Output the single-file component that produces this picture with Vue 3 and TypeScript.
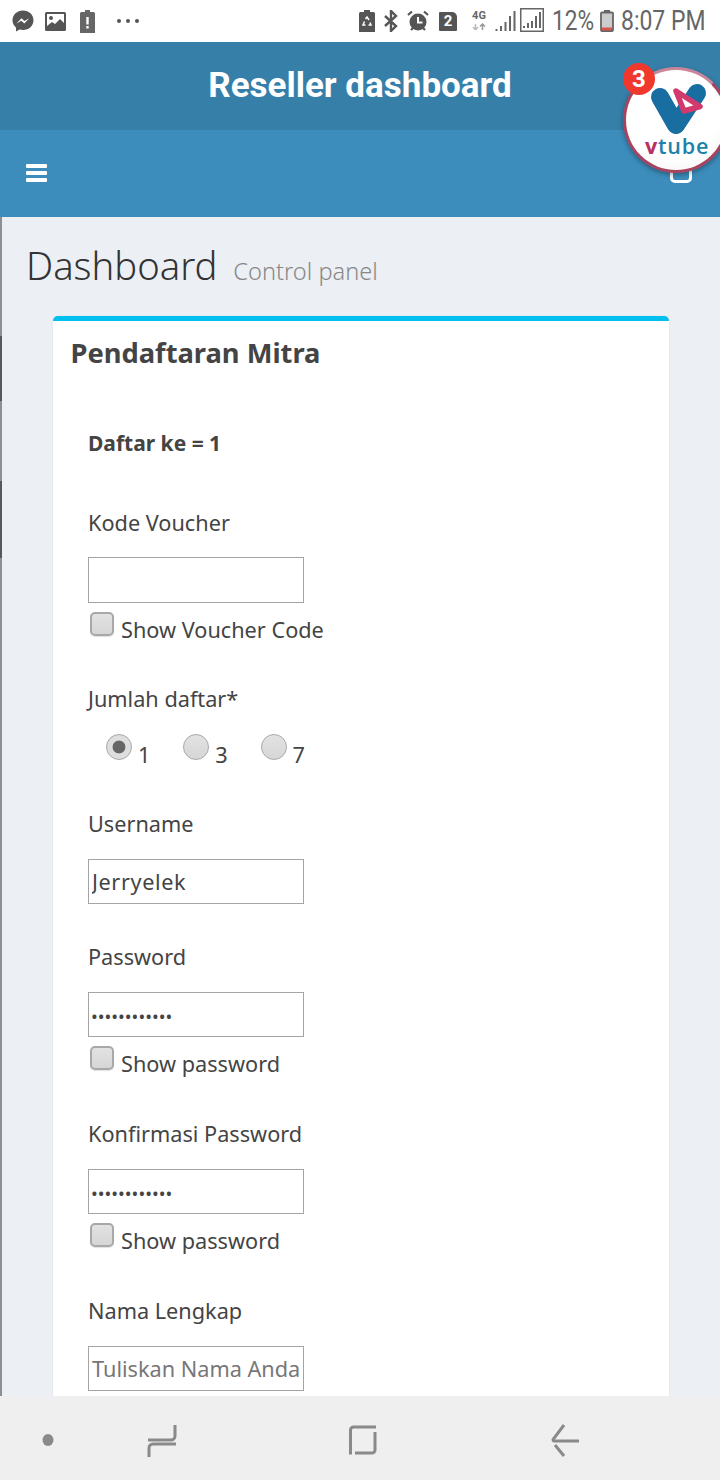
<script setup lang="ts">
  const jumlah = [1, 3, 7];
  const pass = 'abcdefghijkl';
</script>

<template>
  <div class="screen">
    <div class="status">
      <div class="status-left">
        <svg width="22" height="24" viewBox="0 0 22 24"><path d="M11 1.5C5 1.500.5 5.800.5 11.300c0 3 1.300 5.500 3.500 7.300v4l3.600-2c1.100.3 2.200.5 3.400.5 6 0 10.500-4.300 10.500-9.800S17 1.500 11 1.500z" fill="#555"/><path d="M4.500 14.500l5-5.300 3 2.800 4.800-2.800-5 5.300-3-2.800z" fill="#fff"/></svg>
        <svg class="s-img" width="21" height="19" viewBox="0 0 21 19"><rect width="21" height="19" rx="1.500" fill="#555"/><rect x="2" y="2" width="17" height="15" fill="#fff"/><circle cx="6" cy="6" r="2" fill="#555"/><path d="M2 14l5-4 3 2 5-5 4 4v6H2z" fill="#555"/></svg>
        <svg class="s-bat" width="15" height="23" viewBox="0 0 15 23"><path d="M5 0h5v2h3.500a1.500 1.500 0 0 1 1.500 1.500V23H0V3.500A1.500 1.500 0 0 1 1.500 2H5z" fill="#666"/><rect x="6.300" y="7" width="2.400" height="7.500" fill="#fff"/><rect x="6.300" y="16" width="2.400" height="2.500" fill="#fff"/></svg>
        <div class="dots"><i></i><i></i><i></i></div>
      </div>
      <div class="status-right">
        <svg width="16" height="22" viewBox="0 0 16 22"><path d="M5 0h6v2h3.500A1.500 1.500 0 0 1 16 3.500V22H0V3.500A1.500 1.500 0 0 1 1.500 2H5z" fill="#555"/><path d="M6.500 9l1.500-2 2 3M11 12.500l1 2.500H9.500M6.500 15H4l1.500-3.500" fill="none" stroke="#fff" stroke-width="1.500"/></svg>
        <svg class="s-bt" width="14" height="22" viewBox="0 0 14 22"><path d="M1 6l11 10-5 5V1l5 5L1 16" fill="none" stroke="#555" stroke-width="2.400"/></svg>
        <svg class="s-al" width="22" height="22" viewBox="0 0 22 22"><circle cx="11" cy="12" r="8.500" fill="#555"/><path d="M11 7v5.500h4.500" fill="none" stroke="#fff" stroke-width="2"/><path d="M1 5l4-3.500M21 5l-4-3.500M4 20l2-2M18 20l-2-2" stroke="#555" stroke-width="2.200"/></svg>
        <div class="sim">2</div>
        <div class="net">
          <b>4G</b>
          <svg width="14" height="7" viewBox="0 0 14 7"><path d="M3.500 7V1M1 4l2.500 3L6 4" fill="none" stroke="#bbb" stroke-width="1.500"/><path d="M10.500 7V1M8 3.500L10.500 1 13 3.500" fill="none" stroke="#999" stroke-width="1.500"/></svg>
        </div>
        <svg class="s-sig" width="22" height="22" viewBox="0 0 22 22"><path d="M1.500 21v-2M6 21v-5M10.500 21v-9M15 21V6M19.500 21V1" stroke="#666" stroke-width="2" fill="none"/></svg>
        <svg class="s-box" width="24" height="24" viewBox="0 0 24 24"><rect x=".750" y=".750" width="22.500" height="22.500" fill="none" stroke="#666" stroke-width="1.500"/><path d="M4 20v-2M8 20v-5M12 20v-7M16 20V8M20 20V4" stroke="#666" stroke-width="2" fill="none"/></svg>
        <span class="pct">12%</span>
        <svg class="s-pow" width="14" height="22" viewBox="0 0 14 22"><rect x="4" y="0" width="6" height="3" fill="#666"/><rect x="1" y="2.500" width="12" height="18.500" rx="1" fill="#ccc" stroke="#666" stroke-width="1.800"/><rect x="2" y="17.500" width="10" height="3" fill="#d9534f"/></svg>
        <span class="clock">8:07 PM</span>
      </div>
    </div>

    <header class="title-bar">Reseller dashboard</header>
    <nav class="nav-bar">
      <div class="burger"><i></i><i></i><i></i></div>
      <div class="user-bit"></div>
    </nav>

    <main class="main">
      <div class="edge"></div>
      <div class="wrapper">
        <div class="content-header">
          <h1>Dashboard</h1>
          <small>Control panel</small>
        </div>
        <section class="box">
          <h3>Pendaftaran Mitra</h3>
          <div class="form">
            <p class="daftar">Daftar ke = 1</p>

            <div class="group">
              <label class="lbl lbl-first">Kode Voucher</label>
              <input class="field field-tall" type="text" />
              <label class="check check-short"><input type="checkbox" /><span>Show Voucher Code</span></label>
            </div>

            <div class="group">
              <label class="lbl lbl-tight">Jumlah daftar*</label>
              <div class="radios">
                <label v-for="n in jumlah" :key="n" class="radio">
                  <input type="radio" name="jumlah" :checked="n === 1" /><span>{{ n }}</span>
                </label>
              </div>
            </div>

            <div class="group">
              <label class="lbl">Username</label>
              <input class="field user" type="text" value="Jerryelek" />
            </div>

            <div class="group">
              <label class="lbl">Password</label>
              <input class="field pw" type="password" :value="pass" />
              <label class="check"><input type="checkbox" /><span>Show password</span></label>
            </div>

            <div class="group">
              <label class="lbl">Konfirmasi Password</label>
              <input class="field pw" type="password" :value="pass" />
              <label class="check"><input type="checkbox" /><span>Show password</span></label>
            </div>

            <div class="group">
              <label class="lbl">Nama Lengkap</label>
              <input class="field" type="text" placeholder="Tuliskan Nama Anda" />
            </div>
          </div>
        </section>
      </div>
    </main>

    <footer class="softkeys">
      <svg class="k-dot" width="12" height="14" viewBox="0 0 12 14"><ellipse cx="6" cy="7" rx="5.500" ry="6" fill="#8a8a8a"/></svg>
      <svg class="k-rec" width="30" height="33" viewBox="0 0 30 33"><path d="M1 16h23a4 4 0 0 0 4-4V1M29 20H6a4 4 0 0 0-4 4v9" fill="none" stroke="#8a8a8a" stroke-width="3"/></svg>
      <svg class="k-home" width="28" height="30" viewBox="0 0 28 30"><path d="M1.500 29.500V5a3 3 0 0 1 3-3H27M26 7v18a3 3 0 0 1-3 3H6" fill="none" stroke="#8a8a8a" stroke-width="3"/></svg>
      <svg class="k-back" width="30" height="33" viewBox="0 0 30 33"><path d="M14 1L3 15.500a1.500 1.500 0 0 0 1 1.500h25M5 21l9 11" fill="none" stroke="#8a8a8a" stroke-width="3"/></svg>
    </footer>

    <!-- floating chat-head bubble over the header -->
    <div class="bubble">
      <svg class="logo" width="60" height="50" viewBox="0 0 60 50">
        <path d="M13 14l16 28L50 10" fill="none" stroke="#186da1" stroke-width="18" stroke-linecap="round" stroke-linejoin="round"/>
        <path d="M29 8l24 15.500-16 4.500z" fill="#fff" stroke="#d23a6e" stroke-width="5.500" stroke-linejoin="round"/>
      </svg>
      <div class="vtube"><em>v</em>tube</div>
    </div>
    <div class="badge">3</div>
  </div>
</template>

<style>
html, body {
  margin: 0;
  background: #fff;
}
</style>

<style scoped>
.screen {
  position: relative;
  width: 720px;
  height: 1480px;
  overflow: hidden;
  display: flex;
  flex-direction: column;
  font-family: "Noto Sans", "Open Sans", sans-serif;
  color: #444;
}

/* status bar */
.status {
  height: 42px;
  flex: none;
  background: #fff;
  display: flex;
  justify-content: space-between;
  align-items: center;
  font-family: Roboto, sans-serif;
  color: #555;
}
.status-left {
  display: flex;
  align-items: center;
  padding-left: 12px;
}
.s-img { margin-left: 11px; }
.s-bat { margin-left: 14px; }
.dots {
  display: flex;
  gap: 5px;
  margin-left: 22px;
}
.dots i {
  width: 4px;
  height: 4px;
  border-radius: 50%;
  background: #555;
}
.status-right {
  display: flex;
  align-items: center;
  padding-right: 15px;
}
.s-bt { margin-left: 9px; }
.s-al { margin-left: 9px; }
.sim {
  margin-left: 10px;
  width: 18px;
  height: 19px;
  background: #555;
  color: #fff;
  font-size: 15px;
  font-weight: 700;
  line-height: 19px;
  text-align: center;
  border-radius: 1px 5px 1px 1px;
}
.net {
  margin-left: 14px;
  width: 16px;
  display: flex;
  flex-direction: column;
  align-items: center;
  margin-top: -3px;
}
.net b {
  font-size: 11px;
  line-height: 14px;
  font-weight: 700;
  color: #666;
}
.s-sig { margin-left: 8px; }
.s-box { margin-left: 3px; margin-top: -2px; }
.pct,
.clock {
  font-size: 27px;
  line-height: 30px;
  white-space: nowrap;
  color: #666;
  transform-origin: left center;
}
.pct {
  margin-left: 8px;
  width: 41px;
  transform: scaleX(.84);
}
.s-pow { margin-left: 7px; }
.clock {
  margin-left: 7px;
  width: 84px;
  transform: scaleX(.85);
}

/* headers */
.title-bar {
  height: 88px;
  flex: none;
  background: #367fa9;
  color: #fff;
  font-family: Roboto, sans-serif;
  font-size: 35px;
  font-weight: 700;
  line-height: 88px;
  text-align: center;
}
.nav-bar {
  height: 87px;
  flex: none;
  background: #3c8dbc;
  display: flex;
  justify-content: space-between;
  padding: 34px 28px 0 26px;
  box-sizing: border-box;
}
.burger {
  width: 21px;
  height: 18px;
  display: flex;
  flex-direction: column;
  justify-content: space-between;
}
.burger i {
  height: 4px;
  background: #fff;
  border-radius: 1px;
}
.user-bit {
  width: 22px;
  height: 19px;
  box-sizing: border-box;
  border: 3px solid #fff;
  border-radius: 5px;
}

/* content */
.main {
  flex: 1;
  min-height: 0;
  display: flex;
  background: #ecf0f5;
  overflow: hidden;
}
.edge {
  width: 1.500px;
  flex: none;
  background: linear-gradient(#8d8f92 0 119px, #55585c 119px 184px, #8d8f92 184px 264px, #55585c 264px 341px, #8d8f92 341px);
}
.wrapper {
  flex: 1;
  min-width: 0;
}
.content-header {
  height: 99px;
  box-sizing: border-box;
  padding: 22px 0 0 24.500px;
  display: flex;
  align-items: baseline;
  gap: 16px;
}
h1 {
  margin: 0;
  font-size: 38.200px;
  line-height: 52px;
  font-weight: 300;
  color: #333;
}
small {
  font-size: 23.600px;
  font-weight: 300;
  color: #888;
}
.box {
  margin: 0 51px 0 51.500px;
  background: #fff;
  border-top: 5px solid #00c0ef;
  border-radius: 5px 5px 0 0;
  box-shadow: 0 0 1px rgba(0, 0, 0, .2);
  padding: 15px 0 0 17.500px;
  min-height: 1100px;
}
h3 {
  margin: 0;
  font-size: 27.300px;
  line-height: 34px;
  font-weight: 700;
  color: #444;
}
.form {
  padding: 56px 0 0 17.500px;
  display: flex;
  flex-direction: column;
  gap: 35px;
}
.daftar {
  margin: 0 0 10px;
  font-size: 21px;
  line-height: 34px;
  font-weight: 700;
}
.group {
  display: flex;
  flex-direction: column;
  align-items: flex-start;
}
.lbl {
  font-size: 21.700px;
  line-height: 36px;
  margin-bottom: 17px;
}
.lbl-first { margin-bottom: 16px; }
.lbl-tight { margin-bottom: 12px; }
.field {
  width: 216px;
  height: 45px;
  box-sizing: border-box;
  border: 1px solid #a4a4a4;
  border-radius: 0;
  padding: 0 3px;
  margin: 0;
  outline: none;
  background: #fff;
  font: inherit;
  font-size: 21.700px;
  color: #444;
}
.field-tall { height: 46px; }
.field::placeholder { color: #777; }
.user { letter-spacing: .6px; }
.pw {
  font-size: 18px;
  padding: 2px 2px 0;
}
.check {
  display: flex;
  align-items: flex-start;
  height: 44px;
  padding: 9px 0 0 2px;
  box-sizing: border-box;
  font-size: 21.700px;
  line-height: 36px;
}
.check-short { height: 43px; }
.check span { margin-left: 7px; }
.check input {
  appearance: none;
  width: 24px;
  height: 24px;
  margin: 0;
  box-sizing: border-box;
  border: 2px solid #a8a8a8;
  border-radius: 5px;
  background: linear-gradient(#e2e2e2, #d6d6d6);
  box-shadow: 0 1px 1px rgba(0, 0, 0, .12);
}
.radios {
  display: flex;
  padding-left: 18px;
  height: 42px;
}
.radio {
  width: 77.300px;
  display: flex;
  align-items: flex-start;
  font-size: 21.700px;
  line-height: 36px;
}
.radio span { margin: 8px 0 0 6px; }
.radio input {
  appearance: none;
  width: 26px;
  height: 26px;
  margin: 5px 0 0;
  box-sizing: border-box;
  border: 1.500px solid #a8a8a8;
  border-radius: 50%;
  background: linear-gradient(#e2e2e2, #d6d6d6);
}
.radio input:checked {
  background: radial-gradient(circle, #666 0 6px, #dedede 6.800px);
}

/* android soft keys */
.softkeys {
  height: 84px;
  box-sizing: border-box;
  padding-top: 4px;
  flex: none;
  background: #efefef;
  display: flex;
  align-items: center;
}
.k-dot { margin-left: 42px; }
.k-rec { margin-left: 93px; }
.k-home { margin-left: 172px; }
.k-back { margin-left: 173px; }

/* chat head */
.bubble {
  position: absolute;
  left: 623px;
  top: 67px;
  width: 106px;
  height: 106px;
  box-sizing: border-box;
  border-radius: 50%;
  border: 3px solid #a8435f;
  border-top-color: #c9869a;
  background: radial-gradient(circle at 45% 40%, #fff 60%, #eee);
  box-shadow: 0 2px 5px rgba(0, 0, 0, .35);
}
.logo {
  position: absolute;
  left: 21px;
  top: 13px;
  overflow: visible;
}
.vtube {
  position: absolute;
  left: 19px;
  top: 62px;
  font-family: "Open Sans", sans-serif;
  font-size: 21.500px;
  font-weight: 600;
  line-height: 28px;
  letter-spacing: .8px;
  color: #1f82aa;
}
.vtube em {
  font-style: normal;
  font-weight: 700;
  color: #b8305f;
}
.badge {
  position: absolute;
  left: 623px;
  top: 63px;
  width: 32px;
  height: 32px;
  border-radius: 50%;
  background: #f0392c;
  color: #fff;
  font-family: Roboto, sans-serif;
  font-size: 24px;
  font-weight: 700;
  line-height: 32px;
  text-align: center;
}
</style>
